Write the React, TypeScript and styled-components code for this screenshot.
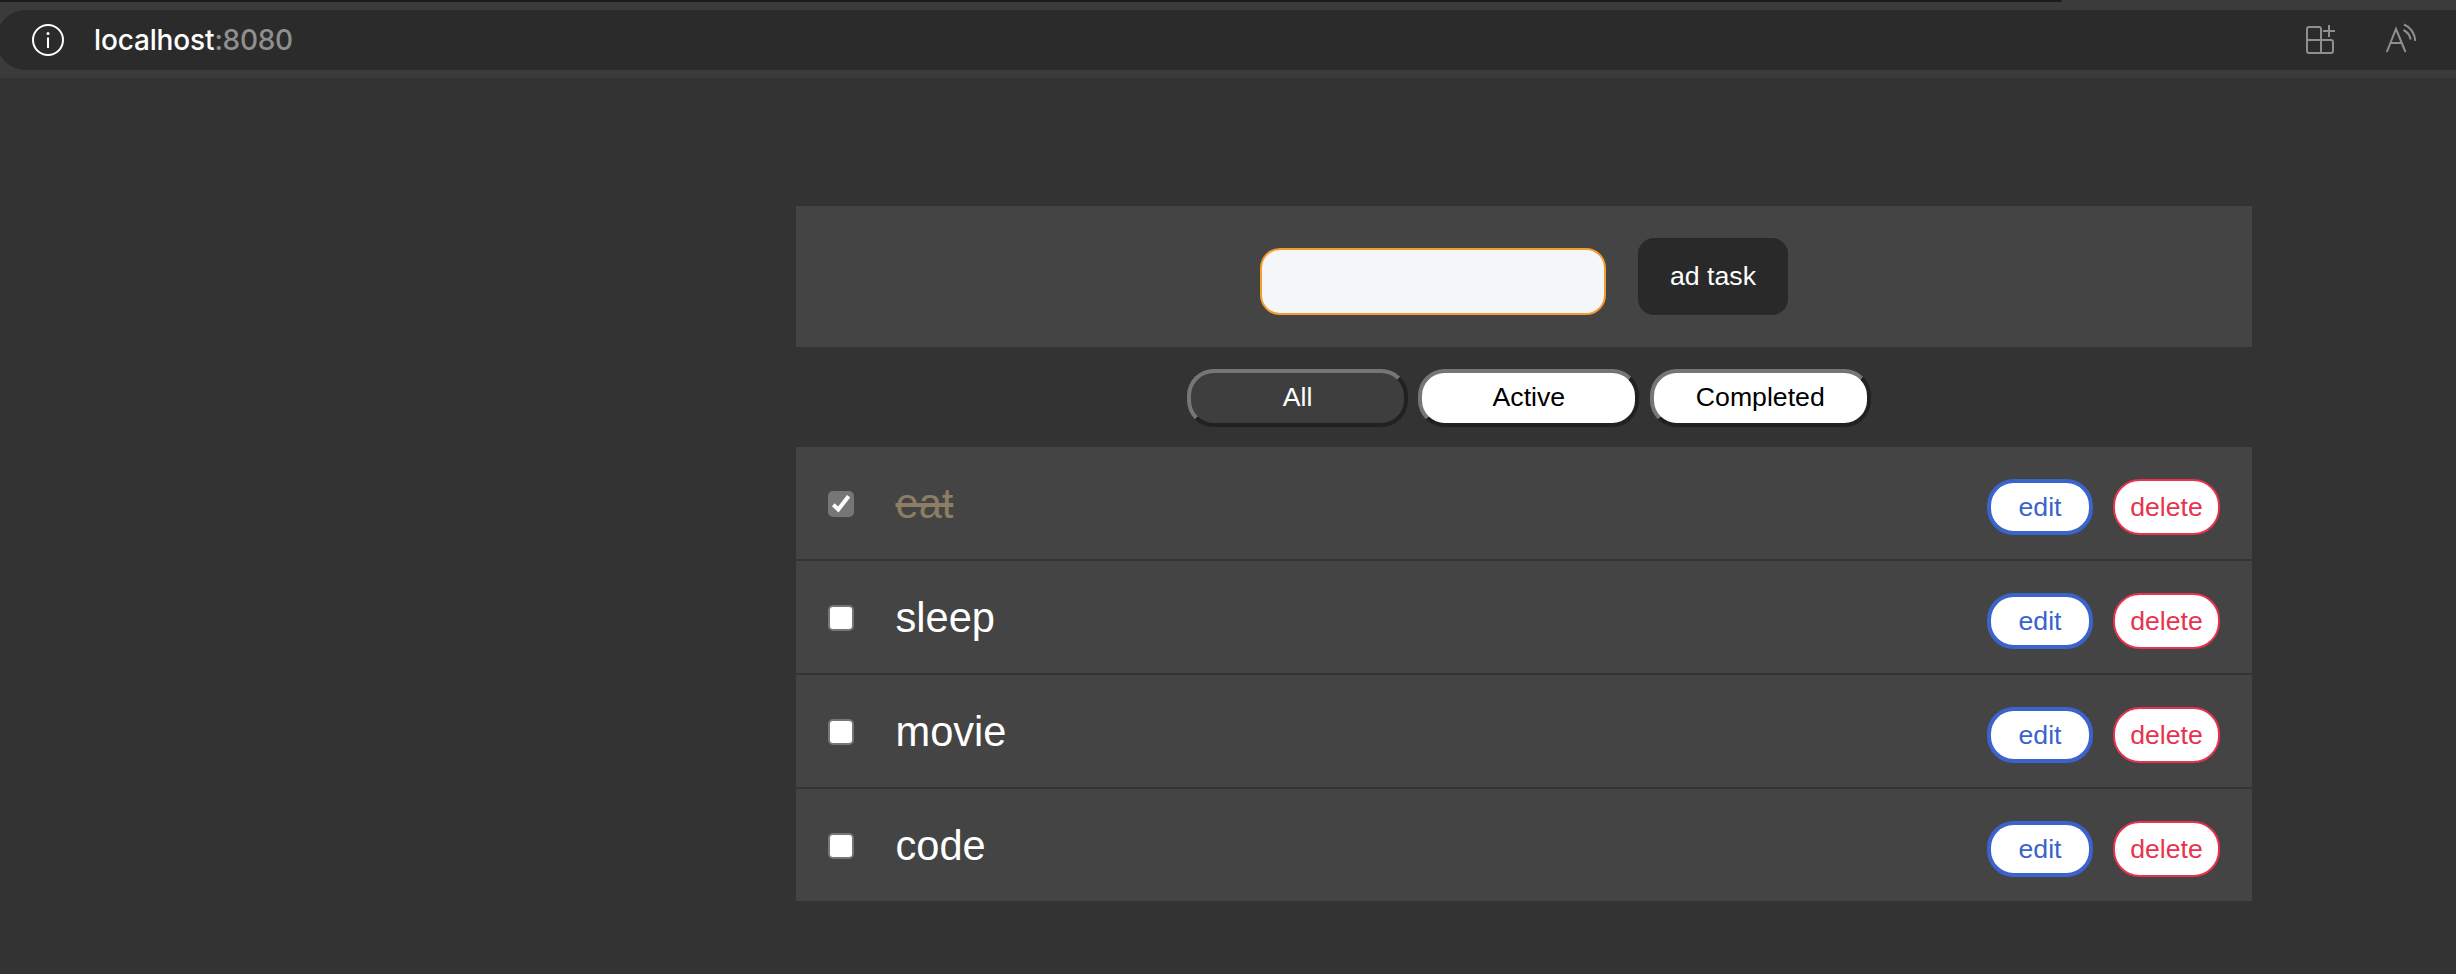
import React, { useState } from "react";
import styled, { createGlobalStyle } from "styled-components";

const GlobalStyle = createGlobalStyle`
  * { box-sizing: border-box; }
  body {
    margin: 0;
    background: #333333;
    font-family: "Liberation Sans", Arial, Helvetica, sans-serif;
  }
`;

const Page = styled.div`
  min-height: 974px;
  overflow: hidden;
`;

const TabStrip = styled.div`
  width: 2062px;
  height: 2px;
  background: #1b1b1b;
  border-bottom-right-radius: 2px;
`;

const Toolbar = styled.header`
  background: #3b3b3b;
  height: 78px;
`;

const AddressBar = styled.div`
  display: flex;
  align-items: center;
  height: 60px;
  margin: 8px 0 0 -4px;
  padding: 0 37px 0 34px;
  background: #2b2b2b;
  border-radius: 30px 0 0 30px;
`;

const Url = styled.div`
  flex: 1;
  margin-left: 30px;
  font-family: Inter, sans-serif;
  font-size: 28px;
  font-weight: 500;
  line-height: 61px;
  letter-spacing: -0.15px;
  color: #ffffff;
  white-space: nowrap;
`;

const Port = styled.span`
  letter-spacing: -0.3px;
  color: #8f8f8f;
`;

const BarIcon = styled.svg<{ $gap?: number; $color?: string }>`
  flex: none;
  margin-left: ${({ $gap = 0 }) => $gap}px;
  fill: none;
  stroke: ${({ $color = "#8f8f8f" }) => $color};
  stroke-width: 2;
`;

const Main = styled.main`
  width: 1456px;
  margin: 128px 0 0 796px;
`;

const TaskForm = styled.form`
  display: flex;
  justify-content: center;
  align-items: flex-end;
  gap: 32px;
  height: 141px;
  padding-bottom: 32px;
  background: #444444;
`;

const TaskInput = styled.input`
  width: 346px;
  height: 67px;
  padding: 0 20px;
  border: 2px solid #f39c2f;
  border-radius: 20px;
  background: #f5f6f8;
  font: 26.667px "Liberation Sans", Arial, sans-serif;
  outline: none;
`;

const AddButton = styled.button`
  width: 150px;
  height: 77px;
  padding: 0;
  border: none;
  border-radius: 16px;
  background: #292929;
  color: #ffffff;
  font: 26.667px "Liberation Sans", Arial, sans-serif;
`;

const Filters = styled.nav`
  display: flex;
  justify-content: center;
  gap: 10.4px;
  padding: 22px 0 20px 9.8px;
`;

const FilterButton = styled.button<{ $active: boolean }>`
  width: 221px;
  height: 58px;
  padding: 0 0 2px;
  border: 4px solid;
  border-color: #767676 #212121 #212121 #767676;
  border-radius: 26.667px;
  background: ${({ $active }) => ($active ? "#3e3e3e" : "#ffffff")};
  color: ${({ $active }) => ($active ? "#ffffff" : "#000000")};
  font: 26.667px "Liberation Sans", Arial, sans-serif;
`;

const TaskList = styled.ul`
  margin: 0;
  padding: 0;
  list-style: none;
`;

const TaskRow = styled.li`
  display: flex;
  align-items: flex-start;
  height: 112px;
  margin-bottom: 2px;
  padding: 32px 32px 0;
  background: #444444;
`;

const CheckBox = styled.button<{ $checked: boolean }>`
  display: block;
  width: 26px;
  height: 26px;
  margin: 12px 41.500px 0 0;
  padding: 0;
  border: 2px solid #767676;
  border-radius: 5px;
  background: ${({ $checked }) => ($checked ? "#767676" : "#ffffff")};
`;

const Tick = styled.svg`
  display: block;
  fill: none;
  stroke: #ffffff;
  stroke-width: 4;
`;

const TaskName = styled.span<{ $done: boolean }>`
  flex: 1;
  padding-top: 1px;
  font-size: 41.6px;
  line-height: 48px;
  color: ${({ $done }) => ($done ? "#8c7d63" : "#ffffff")};
  text-decoration: ${({ $done }) => ($done ? "line-through 4px" : "none")};
`;

const RowButton = styled.button<{ $tone: string; $stroke: number; $width: number }>`
  width: ${({ $width }) => $width}px;
  height: 56px;
  margin-left: 20px;
  padding: 0;
  border: ${({ $stroke, $tone }) => `${$stroke}px solid ${$tone}`};
  border-radius: 26.667px;
  background: #ffffff;
  color: ${({ $tone }) => $tone};
  font: 26.667px "Liberation Sans", Arial, sans-serif;
`;

const filters = ["All", "Active", "Completed"];

export default function App() {
  const [filter, setFilter] = useState("All");
  const [tasks, setTasks] = useState([
    { name: "eat", done: true },
    { name: "sleep", done: false },
    { name: "movie", done: false },
    { name: "code", done: false },
  ]);
  const shown = tasks.filter(
    (t) => filter === "All" || (filter === "Completed") === t.done
  );
  const toggle = (name: string) =>
    setTasks(tasks.map((t) => (t.name === name ? { ...t, done: !t.done } : t)));

  return (
    <Page>
      <GlobalStyle />
      <Toolbar>
        <TabStrip />
        <AddressBar>
          <BarIcon $color="#ffffff" width="34" height="34" viewBox="0 0 34 34">
            <circle cx="18" cy="17" r="15" />
            <path d="M18 14.500v10.500" />
            <circle cx="18" cy="10.4" r="1.5" fill="#ffffff" stroke="none" />
          </BarIcon>
          <Url>
            localhost<Port>:8080</Port>
          </Url>
          <BarIcon width="32" height="32" viewBox="0 0 32 32">
            <path d="M17 29V5a2 2 0 0 0-2-2H5a2 2 0 0 0-2 2v22a2 2 0 0 0 2 2h22a2 2 0 0 0 2-2V18a2 2 0 0 0-2-2H3M25 1v12M19 7h12" />
          </BarIcon>
          <BarIcon $gap={49} width="34" height="34" viewBox="0 0 34 34">
            <path d="M1.800 29 11 6l9.500 23M5.500 20h11.500M19 1.500C25 4 29.500 10 30.300 17.800M18.500 7c4 2 6.500 5 7 9.500" />
          </BarIcon>
        </AddressBar>
      </Toolbar>
      <Main>
        <TaskForm onSubmit={(e) => e.preventDefault()}>
          <TaskInput />
          <AddButton>ad task</AddButton>
        </TaskForm>
        <Filters>
          {filters.map((f) => (
            <FilterButton key={f} $active={f === filter} onClick={() => setFilter(f)}>
              {f}
            </FilterButton>
          ))}
        </Filters>
        <TaskList>
          {shown.map((t) => (
            <TaskRow key={t.name}>
              <CheckBox $checked={t.done} onClick={() => toggle(t.name)}>
                {t.done && (
                  <Tick width="22" height="22" viewBox="0 0 22 22">
                    <path d="M3.300 11.800 8.300 16.500 18.600 3.300" />
                  </Tick>
                )}
              </CheckBox>
              <TaskName $done={t.done}>{t.name}</TaskName>
              <RowButton $tone="#3a63cc" $stroke={4} $width={106}>edit</RowButton>
              <RowButton $tone="#e8334f" $stroke={2} $width={107}>delete</RowButton>
            </TaskRow>
          ))}
        </TaskList>
      </Main>
    </Page>
  );
}
